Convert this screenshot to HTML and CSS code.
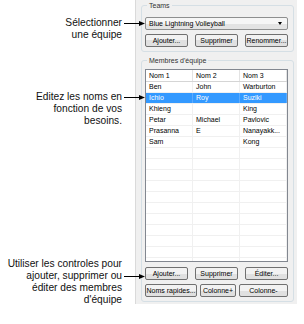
FILE: index.html
```html
<!DOCTYPE html>
<html>
<head>
    <title>Teams</title>
    <link rel="stylesheet" href="styles.css">
</head>
<body>
    <div class="figure">
        <div class="callouts">
            <div class="callout first">
                <div class="callout-text">Sélectionner<br>une équipe</div>
                <svg class="arrow" width="21" height="5" viewBox="0 0 21 5"><line x1="0" y1="2.5" x2="16" y2="2.5" stroke="#000" stroke-width="1"/><polygon points="15,0 21,2.5 15,5" fill="#000"/></svg>
            </div>
            <div class="callout second">
                <div class="callout-text">Editez les noms en<br>fonction de vos<br>besoins.</div>
                <svg class="arrow" width="21" height="5" viewBox="0 0 21 5"><line x1="0" y1="2.5" x2="16" y2="2.5" stroke="#000" stroke-width="1"/><polygon points="15,0 21,2.5 15,5" fill="#000"/></svg>
            </div>
            <div class="callout third">
                <div class="callout-text">Utiliser les controles pour<br>ajouter, supprimer ou<br>éditer des membres<br>d'équipe</div>
                <svg class="arrow low" width="21" height="5" viewBox="0 0 21 5"><line x1="0" y1="2.5" x2="16" y2="2.5" stroke="#000" stroke-width="1"/><polygon points="15,0 21,2.5 15,5" fill="#000"/></svg>
            </div>
        </div>

        <div class="panel">
            <div class="group teams">
                <div class="group-title">Teams</div>
                <div class="combo">
                    <span>Blue Lightning Volleyball</span>
                    <span class="combo-arrow"></span>
                </div>
                <div class="buttons three">
                    <div class="btn">Ajouter...</div>
                    <div class="btn">Supprimer</div>
                    <div class="btn">Renommer...</div>
                </div>
            </div>

            <div class="group members">
                <div class="group-title">Membres d'équipe</div>
                <div class="list">
                    <table>
                        <thead>
                            <tr><th>Nom 1</th><th>Nom 2</th><th>Nom 3</th></tr>
                        </thead>
                        <tbody>
                            <tr><td>Ben</td><td>John</td><td>Warburton</td></tr>
                            <tr class="selected"><td>Ichio</td><td>Roy</td><td>Suziki</td></tr>
                            <tr><td>Khieng</td><td></td><td>King</td></tr>
                            <tr><td>Petar</td><td>Michael</td><td>Pavlovic</td></tr>
                            <tr><td>Prasanna</td><td>E</td><td>Nanayakk...</td></tr>
                            <tr><td>Sam</td><td></td><td>Kong</td></tr>
                            <tr><td></td><td></td><td></td></tr>
                            <tr><td></td><td></td><td></td></tr>
                            <tr><td></td><td></td><td></td></tr>
                            <tr><td></td><td></td><td></td></tr>
                            <tr><td></td><td></td><td></td></tr>
                            <tr><td></td><td></td><td></td></tr>
                            <tr><td></td><td></td><td></td></tr>
                            <tr><td></td><td></td><td></td></tr>
                            <tr><td></td><td></td><td></td></tr>
                            <tr><td></td><td></td><td></td></tr>
                            <tr><td></td><td></td><td></td></tr>
                        </tbody>
                    </table>
                </div>
                <div class="buttons three">
                    <div class="btn">Ajouter...</div>
                    <div class="btn">Supprimer</div>
                    <div class="btn">Éditer...</div>
                </div>
                <div class="buttons row2">
                    <div class="btn">Noms rapides...</div>
                    <div class="btn">Colonne+</div>
                    <div class="btn">Colonne-</div>
                </div>
            </div>
        </div>
    </div>
</body>
</html>
```

FILE: styles.css
```css
body { margin: 0; background: #fff; }
.figure { display: flex; align-items: flex-start; width: 304px; height: 324px; }

/* callouts on the left */
.callouts { width: 145px; flex: none; position: relative; z-index: 1; font-family: "Liberation Sans", Arial, sans-serif; font-size: 10.2px; line-height: 12px; color: #111; }
.callout { display: flex; justify-content: flex-end; align-items: flex-start; }
.callout.first { margin-top: 17px; }
.callout.second { margin-top: 50px; }
.callout.third { margin-top: 131px; }
.callout-text { text-align: right; }
.arrow { flex: none; margin-left: 2px; margin-top: 4px; }
.arrow.low { margin-top: 16px; }

/* dialog panel */
.panel { width: 162px; height: 304px; margin-left: -10px; flex: none; box-sizing: border-box; background: #f0f0f0; border-left: 1px solid #dadada; padding: 0 3px 0 5px; font-family: "Liberation Sans", Arial, sans-serif; font-size: 7px; color: #000; }
.group { border: 1px solid #d5dfe5; border-radius: 3px; padding: 0 5px 4px 3px; }
.group.teams { margin-top: 5px; }
.group.members { margin-top: 8px; }
.group-title { width: fit-content; margin: -5px 0 0 2px; padding: 0 2px; line-height: 9px; background: #f0f0f0; color: #333; }

.combo { display: flex; align-items: center; justify-content: space-between; height: 13px; margin-top: 7px; padding: 0 5px 0 3px; box-sizing: border-box; border: 1px solid #8e8f8f; border-radius: 2px; background: linear-gradient(#f6f6f6 50%, #e3e3e3 50%); }
.combo-arrow { width: 0; height: 0; border-left: 2.5px solid transparent; border-right: 2.5px solid transparent; border-top: 3px solid #000; }

.buttons { display: grid; margin-top: 4px; }
.buttons.three { grid-template-columns: 1fr 1fr 1fr; column-gap: 7px; }
.members .buttons.three { margin-top: 5px; }
.buttons.row2 { grid-template-columns: 52px 36px 1fr; column-gap: 3px; margin-top: 4px; }
.btn { height: 13px; line-height: 11px; box-sizing: border-box; text-align: center; white-space: nowrap; overflow: hidden; border: 1px solid #707070; border-radius: 2px; background: linear-gradient(#f2f2f2 50%, #e0e0e0 50%); }

/* member list */
.list { height: 193px; margin-top: 4px; box-sizing: border-box; overflow: hidden; border: 1px solid #828790; background: #fff; }
.list table { width: 100%; border-collapse: collapse; table-layout: fixed; }
.list th, .list td { padding: 0 0 0 3px; text-align: left; font-weight: normal; white-space: nowrap; overflow: hidden; border-right: 1px solid #f0f0f0; }
.list th { height: 11px; border-bottom: 1px solid #d5d5d5; border-right-color: #e3e3e3; }
.list th:first-child, .list th:nth-child(2) { width: 43px; }
.list td { height: 10px; line-height: 10px; border-bottom: 1px solid #f0f0f0; }
.list tr.selected td { background: #3399ff; color: #fff; border-right-color: #5aabff; }
```
